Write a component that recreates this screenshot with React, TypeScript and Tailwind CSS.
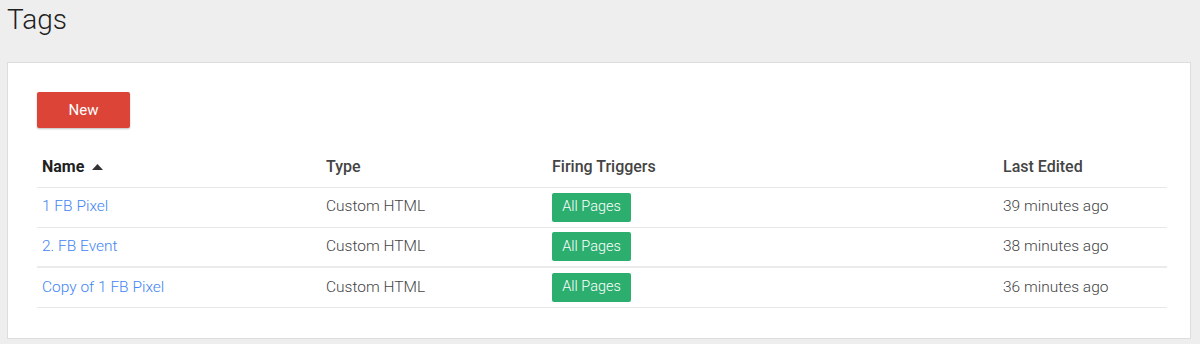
const rows = [
  { name: "1 FB Pixel", type: "Custom HTML", trigger: "All Pages", edited: "39 minutes ago" },
  { name: "2. FB Event", type: "Custom HTML", trigger: "All Pages", edited: "38 minutes ago" },
  { name: "Copy of 1 FB Pixel", type: "Custom HTML", trigger: "All Pages", edited: "36 minutes ago" },
];

const font = { fontFamily: "Roboto, 'Liberation Sans', sans-serif" };

export default function App() {
  return (
    <div className="w-[1200px] h-[344px] bg-[#eeeeee] px-[7px] overflow-hidden" style={font}>
      <h1 className="text-[28px] leading-[40px] font-light text-[#212121] h-[62px]">Tags</h1>

      <div className="w-[1184px] bg-white border border-[#dddddd] pl-[29px] pr-[23px] pt-[29px] pb-[30px]">
        <button className="w-[93px] h-[36px] bg-[#db4437] text-white text-[15px] rounded-[2px] shadow-[0_1px_2px_rgba(0,0,0,0.25)]">
          New
        </button>

        <table className="w-[1130px] mt-[19px] border-collapse table-fixed">
          <colgroup>
            <col className="w-[284px]" />
            <col className="w-[226px]" />
            <col className="w-[451px]" />
            <col className="w-[169px]" />
          </colgroup>
          <thead>
            <tr className="h-[40px] border-b border-[#e8e8e8] text-left text-[16px]">
              <th className="px-[5px] font-bold text-[#212121]">
                <span className="inline-flex items-center gap-[8px]">
                  Name
                  <svg width="11" height="6" viewBox="0 0 11 6">
                    <path d="M0 6 L5.5 0 L11 6 Z" fill="#333" />
                  </svg>
                </span>
              </th>
              <th className="px-[5px] font-medium text-[#444]">Type</th>
              <th className="px-[5px] font-medium text-[#444]">Firing Triggers</th>
              <th className="px-[5px] font-medium text-[#444]">Last Edited</th>
            </tr>
          </thead>
          <tbody>
            {rows.map((r, i) => (
              <tr
                key={r.name}
                className={`h-[40px] text-[15.5px] font-light text-[#444] ${i === 1 ? "border-b-2 border-[#ebebeb]" : "border-b border-[#e8e8e8]"}`}
              >
                <td className="px-[5px] text-[#4285f4]">{r.name}</td>
                <td className="px-[5px]">{r.type}</td>
                <td className="px-[5px]">
                  <span className="inline-flex items-center justify-center w-[79px] h-[29px] bg-[#2bae6e] text-white text-[14.5px] font-light rounded-[2px]">
                    {r.trigger}
                  </span>
                </td>
                <td className="px-[5px]">{r.edited}</td>
              </tr>
            ))}
          </tbody>
        </table>
      </div>
    </div>
  );
}
